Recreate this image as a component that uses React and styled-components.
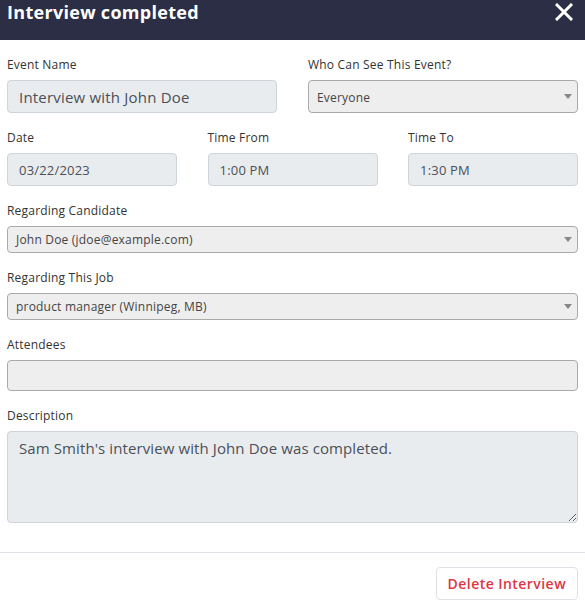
import styled, { createGlobalStyle } from "styled-components";

const GlobalStyle = createGlobalStyle`
  body {
    margin: 0;
    background: #fff;
    font-family: "Open Sans", "Liberation Sans", sans-serif;
    letter-spacing: 0.2px;
  }
  * { box-sizing: border-box; }
`;

const Modal = styled.div`
  width: 585px;
  background: #fff;
`;

const Header = styled.header`
  display: flex;
  justify-content: space-between;
  align-items: flex-start;
  height: 40px;
  padding: 0 9px 0 7px;
  background: #2b2e45;
  color: #fff;
`;

const Title = styled.h2`
  margin: 0;
  font-size: 18px;
  line-height: 24px;
  font-weight: 700;
  letter-spacing: 0.3px;
`;

const CloseButton = styled.button`
  display: flex;
  align-items: center;
  justify-content: center;
  width: 24px;
  height: 24px;
  padding: 0;
  border: 0;
  background: none;
  cursor: pointer;
`;

const Body = styled.div`
  display: flex;
  flex-direction: column;
  gap: 16px;
  padding: 16px 7px 29px;
`;

const Row = styled.div`
  display: grid;
  grid-template-columns: repeat(${({ cols }) => cols}, 1fr);
  column-gap: ${({ cols }) => (cols === 3 ? 30.5 : 31)}px;
`;

const Field = styled.div`
  display: flex;
  flex-direction: column;
  gap: 6px;
`;

const Label = styled.label`
  font-size: 12px;
  line-height: 18px;
  color: #333;
`;

const Input = styled.input`
  width: 100%;
  height: ${({ h }) => h || 33}px;
  padding: 0 11px;
  border: 1px solid #ced4da;
  border-radius: 4px;
  background: #e9ecef;
  color: #495057;
  font-family: inherit;
  font-size: ${({ size }) => size || 15}px;
  letter-spacing: 0.2px;
  outline: none;
`;

const SelectBox = styled.div`
  position: relative;
  display: flex;
  align-items: center;
  height: ${({ h }) => h || 27}px;
  padding: 0 24px 0 8px;
  border: 1px solid #aaa;
  border-radius: 4px;
  background: #eee;
  color: #444;
  font-size: 12px;
  line-height: 1;
  padding-top: ${({ h }) => (h && h > 32 ? 2 : 0)}px;
`;

const Arrow = styled.span`
  position: absolute;
  right: 5px;
  top: 50%;
  margin-top: -3px;
  width: 0;
  height: 0;
  border-left: 4px solid transparent;
  border-right: 4px solid transparent;
  border-top: 5px solid #888;
`;

const TextArea = styled.textarea`
  width: 100%;
  height: 92px;
  padding: 5px 11px;
  border: 1px solid #ced4da;
  border-radius: 4px;
  background: #e9ecef;
  color: #495057;
  font-family: inherit;
  font-size: 15px;
  line-height: 22px;
  letter-spacing: 0.1px;
  resize: vertical;
  outline: none;
  display: block;
`;

const Footer = styled.footer`
  display: flex;
  justify-content: flex-end;
  padding: 14px 7px 5px;
  border-top: 1px solid #dee2e6;
`;

const DangerButton = styled.button`
  height: 33px;
  padding: 0 11px;
  border: 1px solid #dee2e6;
  border-radius: 4px;
  background: #fff;
  color: #dc3545;
  font-family: inherit;
  font-size: 14px;
  font-weight: 600;
  letter-spacing: 0.45px;
  cursor: pointer;
`;

function Select({ value, h }) {
  return (
    <SelectBox h={h}>
      {value}
      <Arrow />
    </SelectBox>
  );
}

export default function App() {
  return (
    <>
      <GlobalStyle />
      <Modal>
        <Header>
          <Title>Interview completed</Title>
          <CloseButton aria-label="Close">
            <svg width="18" height="18" viewBox="0 0 18 18">
              <path
                d="M2 2 L16 16 M16 2 L2 16"
                stroke="#fff"
                strokeWidth="3"
                strokeLinecap="square"
              />
            </svg>
          </CloseButton>
        </Header>
        <Body>
          <Row cols={2}>
            <Field>
              <Label>Event Name</Label>
              <Input disabled defaultValue="Interview with John Doe" />
            </Field>
            <Field>
              <Label>Who Can See This Event?</Label>
              <Select value="Everyone" h={33} />
            </Field>
          </Row>
          <Row cols={3}>
            <Field>
              <Label>Date</Label>
              <Input disabled size={13} defaultValue="03/22/2023" />
            </Field>
            <Field>
              <Label>Time From</Label>
              <Input disabled size={13} defaultValue="1:00 PM" />
            </Field>
            <Field>
              <Label>Time To</Label>
              <Input disabled size={13} defaultValue="1:30 PM" />
            </Field>
          </Row>
          <Field>
            <Label>Regarding Candidate</Label>
            <Select value="John Doe (jdoe@example.com)" />
          </Field>
          <Field>
            <Label>Regarding This Job</Label>
            <Select value="product manager (Winnipeg, MB)" />
          </Field>
          <Field>
            <Label>Attendees</Label>
            <SelectBox h={31} />
          </Field>
          <Field>
            <Label>Description</Label>
            <TextArea
              readOnly
              defaultValue="Sam Smith's interview with John Doe was completed."
            />
          </Field>
        </Body>
        <Footer>
          <DangerButton>Delete Interview</DangerButton>
        </Footer>
      </Modal>
    </>
  );
}
